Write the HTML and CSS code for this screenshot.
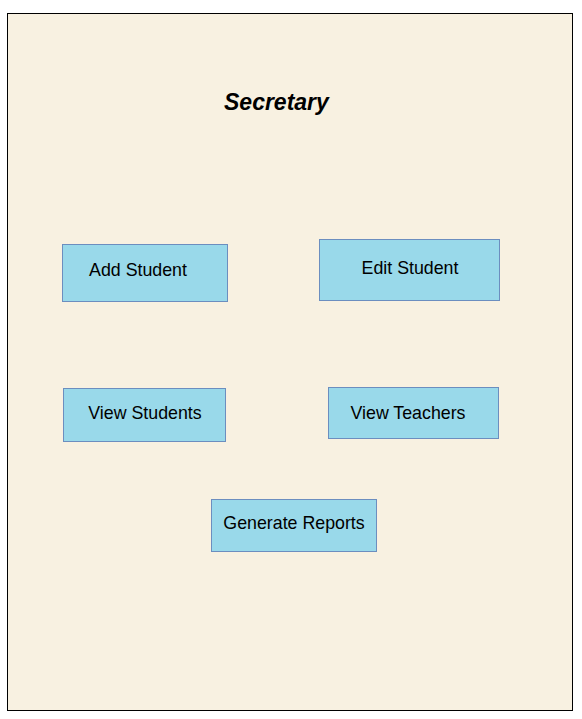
FILE: index.html
```html
<!DOCTYPE html>
<html>
<head>
<meta charset="utf-8">
<link rel="stylesheet" href="styles.css">
</head>
<body>
<div class="frame">
  <div class="title">Secretary</div>
  <div class="row row1">
    <div class="btn b-add">Add Student</div>
    <div class="btn b-edit">Edit Student</div>
  </div>
  <div class="row row2">
    <div class="btn b-vs">View Students</div>
    <div class="btn b-vt">View Teachers</div>
  </div>
  <div class="row row3">
    <div class="btn b-gen">Generate Reports</div>
  </div>
</div>
</body>
</html>
```
FILE: styles.css
```css
html, body {
  margin: 0;
  padding: 0;
  background: #ffffff;
}
body {
  font-family: "Liberation Sans", Arial, sans-serif;
}
.frame {
  box-sizing: border-box;
  margin: 13px 0 0 7px;
  width: 566px;
  height: 698px;
  border: 1px solid #000000;
  background: #f8f1e1;
  display: flex;
  flex-direction: column;
}
.title {
  margin-top: 73px;
  padding-left: 216px;
  height: 30px;
  line-height: 30px;
  font-size: 23px;
  font-weight: bold;
  font-style: italic;
  color: #000;
}
.row {
  display: flex;
  align-items: flex-start;
}
.row1 {
  margin-top: 122px;
  padding-left: 54px;
  gap: 91px;
}
.row2 {
  margin-top: 85px;
  padding-left: 55px;
  gap: 102px;
}
.row3 {
  margin-top: 57px;
  padding-left: 203px;
}
.btn {
  box-sizing: border-box;
  border: 1px solid #6c8ebf;
  background: #99d9ea;
  color: #000;
  font-size: 17.8px;
  display: flex;
  align-items: center;
  justify-content: center;
  white-space: nowrap;
}
.b-add {
  margin-top: 5px;
  width: 166px;
  height: 58px;
  padding: 0 14px 5px 0;
}
.b-edit {
  width: 181px;
  height: 62px;
  padding: 0 0 3px 1px;
}
.b-vs {
  margin-top: 1px;
  width: 163px;
  height: 54px;
  padding: 0 0 3px 1px;
}
.b-vt {
  width: 171px;
  height: 52px;
  padding: 0 11px 0 0;
}
.b-gen {
  width: 166px;
  height: 53px;
  padding: 0 0 4px 0;
}
```
